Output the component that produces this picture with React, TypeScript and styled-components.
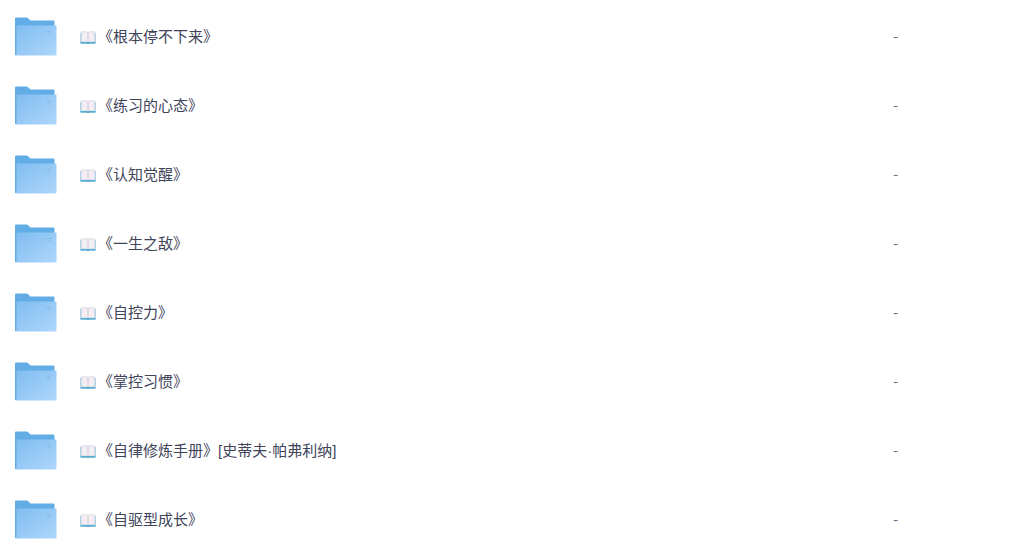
import React from "react";
import styled, { createGlobalStyle } from "styled-components";

const GlobalStyle = createGlobalStyle`
  * { box-sizing: border-box; }
  html { scrollbar-width: none; }
  body {
    margin: 0;
    background: #fff;
    color: #40445a;
    font-family: "Liberation Sans", "Noto Sans CJK SC", sans-serif;
    font-size: 15px;
    line-height: 24px;
  }
`;

const Page = styled.main`
  padding-top: 2px;
`;

const FileTable = styled.table`
  width: 100%;
  border-collapse: collapse;
  table-layout: fixed;
`;

const FileRow = styled.tr`
  height: 69px;
`;

const IconCell = styled.td`
  width: 80px;
  padding: 0 0 0 14px;
  vertical-align: middle;
`;

const NameCell = styled.td`
  padding: 0;
  vertical-align: middle;
`;

const SizeCell = styled.td`
  width: 131px;
  padding: 0 0 2px;
  vertical-align: middle;
  color: #6c7080;
  font-family: "Noto Sans CJK SC", sans-serif;
`;

const FileName = styled.span`
  display: flex;
  align-items: center;
  gap: 2px;
  white-space: nowrap;
`;

const FolderSvg = styled.svg`
  display: block;
  width: 43px;
  height: 40px;
`;

const BookSvg = styled.svg`
  flex: none;
  width: 16px;
  height: 16px;
`;

function FolderIcon() {
  return (
    <FolderSvg viewBox="0 0 43 40" aria-hidden="true">
      <defs>
        <linearGradient id="folderFront" x1="0" y1="0" x2="1" y2="1">
          <stop offset="0" stopColor="#7fbdf0" />
          <stop offset="1" stopColor="#aed6fb" />
        </linearGradient>
      </defs>
      <path
        d="M1 1.5Q1 0.5 2 0.5H12.5Q13.5 0.5 14.2 1.3L16.5 3.5H39.5Q40.5 3.5 40.5 4.5V38H1Z"
        fill="#62ade6"
      />
      <path
        d="M2.5 38.5V9.5Q2.5 8.5 3.5 8.5H41.5Q42.5 8.5 42.5 9.5V37.5Q42.5 38.5 41.5 38.5H1.5Q1 38.5 1 37.5Z"
        fill="url(#folderFront)"
      />
      <path
        d="M32.5 14.5H36.5M33.5 16.5Q35.5 18 36.5 15.5"
        fill="none"
        stroke="#6cacdf"
        strokeWidth="0.7"
        opacity="0.7"
      />
    </FolderSvg>
  );
}

function BookIcon() {
  return (
    <BookSvg viewBox="0 0 16 16" aria-hidden="true">
      <path d="M0.3 4H15.7V14.6H9.5L8 15.2L6.5 14.6H0.3Z" fill="#8bc7e2" />
      <path d="M0.6 13.2H15.4V14.6H9.5L8 15.1L6.5 14.6H0.6Z" fill="#4ba3ca" />
      <path d="M1.2 3Q5 2.2 8 3.2Q11 2.2 14.8 3V12.8H9L8 13.3L7 12.8H1.2Z" fill="#f3eef4" />
      <path d="M8 3.2V13.1" stroke="#c9bccb" strokeWidth="0.8" />
      <path
        d="M1.2 12.8V3Q5 2.2 8 3.2Q11 2.2 14.8 3V12.8"
        fill="none"
        stroke="#c9cdda"
        strokeWidth="0.6"
      />
    </BookSvg>
  );
}

const files = [
  "《根本停不下来》",
  "《练习的心态》",
  "《认知觉醒》",
  "《一生之敌》",
  "《自控力》",
  "《掌控习惯》",
  "《自律修炼手册》[史蒂夫·帕弗利纳]",
  "《自驱型成长》",
];

export default function App() {
  return (
    <>
      <GlobalStyle />
      <Page>
        <FileTable>
          <tbody>
            {files.map((name) => (
              <FileRow key={name}>
                <IconCell>
                  <FolderIcon />
                </IconCell>
                <NameCell>
                  <FileName>
                    <BookIcon />
                    <span>{name}</span>
                  </FileName>
                </NameCell>
                <SizeCell>-</SizeCell>
              </FileRow>
            ))}
          </tbody>
        </FileTable>
      </Page>
    </>
  );
}
